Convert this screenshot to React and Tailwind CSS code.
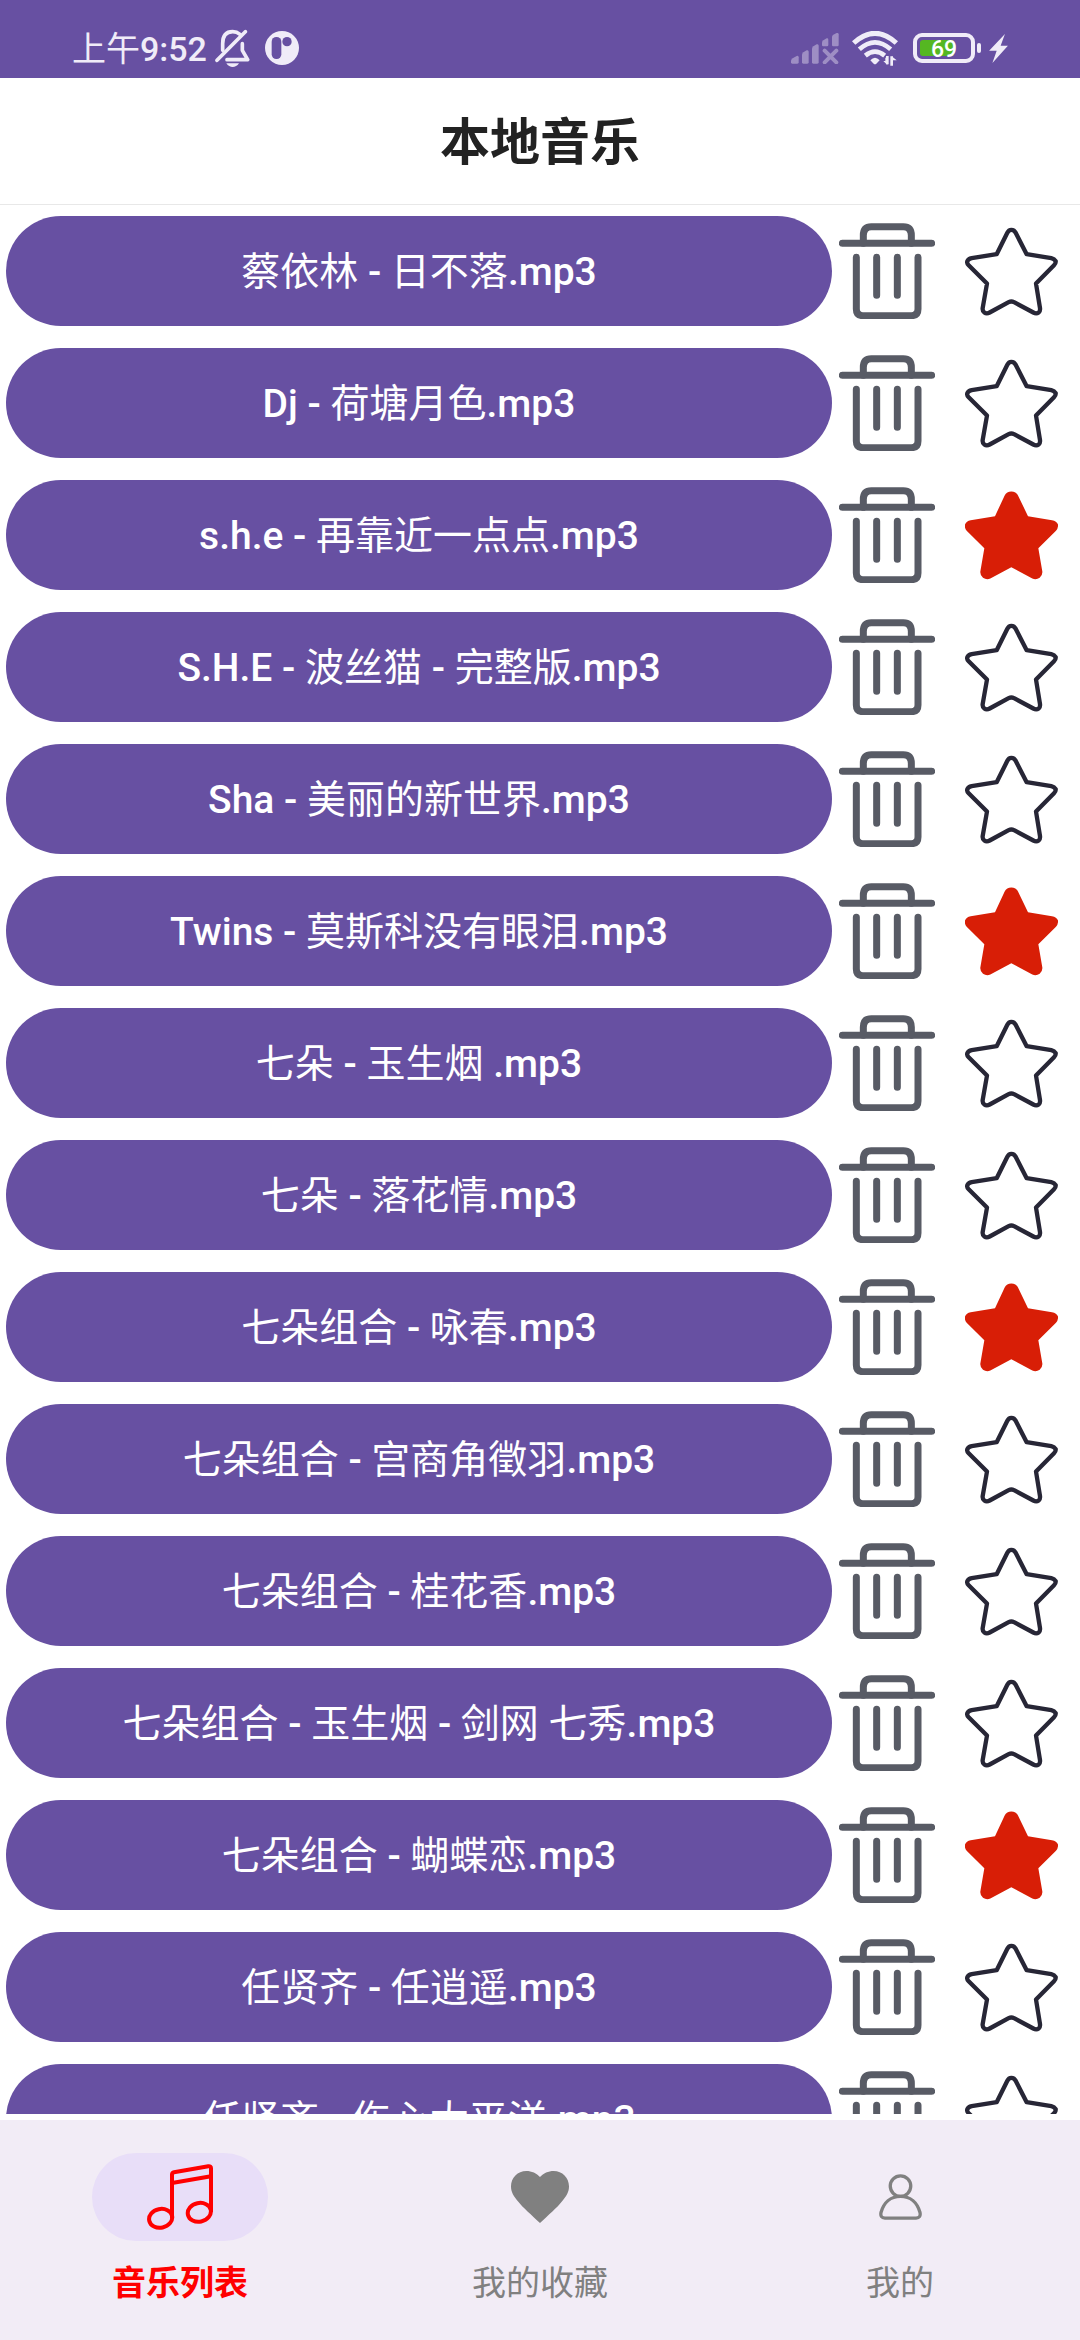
import React, { useState } from "react";

const SONGS = [
  ["蔡依林 - 日不落.mp3", false],
  ["Dj - 荷塘月色.mp3", false],
  ["s.h.e - 再靠近一点点.mp3", true],
  ["S.H.E - 波丝猫 - 完整版.mp3", false],
  ["Sha - 美丽的新世界.mp3", false],
  ["Twins - 莫斯科没有眼泪.mp3", true],
  ["七朵 - 玉生烟 .mp3", false],
  ["七朵 - 落花情.mp3", false],
  ["七朵组合 - 咏春.mp3", true],
  ["七朵组合 - 宫商角徵羽.mp3", false],
  ["七朵组合 - 桂花香.mp3", false],
  ["七朵组合 - 玉生烟 - 剑网 七秀.mp3", false],
  ["七朵组合 - 蝴蝶恋.mp3", true],
  ["任贤齐 - 任逍遥.mp3", false],
  ["任贤齐 - 伤心太平洋.mp3", false],
];

// Latin runs are set in medium weight, Chinese runs in regular.
function MixedText({ text }) {
  return text.split(/([\u0020-\u007e]+)/).map((part, i) =>
    i % 2 === 1 ? (
      <span key={i} className="font-medium">{part}</span>
    ) : (
      part
    )
  );
}

function BellOffIcon() {
  return (
    <svg viewBox="0 0 105 114" className="h-[38px] w-[35px]" fill="none" stroke="currentColor" strokeWidth="11" strokeLinecap="round" strokeLinejoin="round" aria-hidden="true">
      <path d="M23 64V44C23 20 34 8 53 8C62 8 69 11 75 16" />
      <path d="M6 94L91 8" />
      <path d="M82 44V64L98 92H36" />
      <path d="M34 103H72C67 111 60 114 53 114C46 114 39 111 34 103Z" fill="currentColor" stroke="none" />
    </svg>
  );
}

function AppBadgeIcon() {
  return (
    <svg viewBox="0 0 102 102" className="size-[34px]" aria-hidden="true">
      <circle cx="51" cy="51" r="51" fill="currentColor" />
      <rect x="20" y="18" width="29" height="66" rx="14" fill="#6750a2" />
      <circle cx="66" cy="32" r="14" fill="#6750a2" />
    </svg>
  );
}

function SignalIcon() {
  return (
    <svg viewBox="0 0 144 93" className="h-[31px] w-[48px] opacity-40" fill="currentColor" aria-hidden="true">
      <path d="M0 84Q0 79 5 76L17 69Q23 67 23 73V88Q23 92 19 92H4Q0 92 0 88Z" />
      <path d="M33 66Q33 61 37 58L47 52Q53 50 53 56V88Q53 92 49 92H37Q33 92 33 88Z" />
      <path d="M63 48Q63 43 67 40L77 34Q83 32 83 38V88Q83 92 79 92H67Q63 92 63 88Z" />
      <path d="M93 29Q93 25 97 22L107 16Q112 15 112 20V36Q112 40 108 40H97Q93 40 93 36Z" />
      <path d="M123 12Q123 8 127 5L137 0Q143 -1 143 4V36Q143 40 139 40H127Q123 40 123 36Z" />
      <path d="M101 53L136 88M136 53L101 88" fill="none" stroke="currentColor" strokeWidth="12" strokeLinecap="round" />
    </svg>
  );
}

function WifiIcon() {
  return (
    <svg viewBox="0 0 138 105" className="h-[35px] w-[46px]" fill="none" stroke="currentColor" aria-hidden="true">
      <path d="M5 36Q69 -22 133 36" strokeWidth="15" />
      <path d="M22 55Q69 13 116 55" strokeWidth="14" />
      <path d="M40 74Q69 50 98 74" strokeWidth="14" />
      <path d="M55 88Q69 72 83 88L73 98Q69 102 65 98Z" fill="currentColor" stroke="none" />
      <path d="M106 75V102L94 90H100V81Z" fill="currentColor" stroke="none" />
      <path d="M106 75V100M119 76V104" strokeWidth="8" />
      <path d="M119 76L134 88H119Z" fill="currentColor" stroke="none" />
    </svg>
  );
}

function BoltIcon() {
  return (
    <svg viewBox="0 0 57 88" className="h-[29px] w-[19px]" fill="currentColor" aria-hidden="true">
      <path d="M48 0L0 51H23L10 88L57 36H35Z" />
    </svg>
  );
}

function Battery() {
  return (
    <div className="flex items-center gap-[2px]" aria-label="电量 69%">
      <div className="relative flex h-[30px] w-[62px] items-center justify-center rounded-[9px] border-4 border-[#f0ecf8]">
        <div className="absolute inset-y-[3px] left-[3px] w-[34px] rounded-[3px] bg-[#55b722]" />
        <span className="relative pt-[2px] text-[23px] leading-none font-medium text-white">69</span>
      </div>
      <div className="h-[10px] w-1 rounded-full bg-[#f0ecf8]" />
    </div>
  );
}

function TrashIcon() {
  return (
    <svg viewBox="0 0 288 288" className="size-24" fill="none" stroke="#585b65" strokeWidth="21" strokeLinecap="round" aria-hidden="true">
      <path d="M10 61H278" />
      <path d="M73 61V37Q73 11 97 11H193Q217 11 217 37V61" />
      <path d="M52 103V258Q52 278 72 278H217Q237 278 237 258V103" />
      <path d="M113 103V217M175 103V217" />
    </svg>
  );
}

function StarIcon({ filled }) {
  return filled ? (
    <svg viewBox="0 0 279 266" className="h-[89px] w-[93px]" fill="#d81e06" aria-hidden="true">
      <path d="M139 1Q153 1 159 13L189 75L261 87Q275 89 279 100Q280 111 273 119L220 171L232 241Q233 253 224 260Q213 267 202 262L139 228L76 262Q65 267 54 260Q45 253 46 241L58 171L5 119Q-2 111 0 100Q4 89 17 87L90 75L119 13Q125 1 139 1Z" />
    </svg>
  ) : (
    <svg viewBox="0 0 279 266" className="h-[89px] w-[93px]" fill="none" stroke="#272636" strokeWidth="13" strokeLinejoin="round" aria-hidden="true">
      <path d="M139 8Q148 8 152 17L185 81L259 93Q268 95 272 102Q273 108 267 114L213 169L225 243Q226 252 221 256Q214 261 205 256L147 225Q139 221 131 225L74 256Q65 261 58 256Q52 252 53 243L66 169L11 114Q5 108 7 102Q10 95 20 93L95 81L127 17Q131 8 139 8Z" />
    </svg>
  );
}

function MusicIcon() {
  return (
    <svg viewBox="0 0 198 198" className="size-[66px]" fill="none" stroke="currentColor" strokeWidth="12" strokeLinejoin="round" aria-hidden="true">
      <path d="M75 162V32Q75 26 81 25L184 7Q192 6 192 13V144" />
      <path d="M75 57L192 37" />
      <ellipse cx="41" cy="163" rx="35" ry="28" transform="rotate(-12 41 163)" />
      <ellipse cx="157" cy="145" rx="35" ry="28" transform="rotate(-12 157 145)" />
    </svg>
  );
}

function HeartIcon() {
  return (
    <svg viewBox="0 0 174 156" className="h-[52px] w-[58px]" fill="currentColor" aria-hidden="true">
      <path d="M87 156C60 130 36 110 22 92C8 76 0 64 0 46C0 20 20 0 46 0C62 0 77 7 87 18C97 7 112 0 128 0C154 0 174 20 174 46C174 64 166 76 152 92C138 110 114 130 87 156Z" />
    </svg>
  );
}

function PersonIcon() {
  return (
    <svg viewBox="0 0 130 138" className="h-[46px] w-[43px]" fill="none" stroke="currentColor" strokeWidth="10" aria-hidden="true">
      <circle cx="65" cy="36" r="31" />
      <path d="M65 67C95 67 116 86 124 116Q127 132 112 133H18Q3 132 6 116C14 86 35 67 65 67Z" />
    </svg>
  );
}

const TABS = [
  ["音乐列表", MusicIcon],
  ["我的收藏", HeartIcon],
  ["我的", PersonIcon],
];

export default function App() {
  const [favourites, setFavourites] = useState(SONGS.map((s) => s[1]));
  const [tab, setTab] = useState(0);
  const toggle = (i) => setFavourites(favourites.map((f, n) => (n === i ? !f : f)));

  return (
    <div className="flex h-screen flex-col bg-white font-[Roboto,'Noto_Sans_CJK_SC',sans-serif]">
      <div className="flex h-[78px] shrink-0 items-center justify-between bg-[#6750a2] px-[72px] pt-[18px] text-[#f0ecf8]">
        <div className="flex items-center">
          <span className="pt-[2px] text-[34px] leading-none"><MixedText text="上午9:52" /></span>
          <span className="ml-2 flex items-center gap-[15px]">
            <BellOffIcon />
            <AppBadgeIcon />
          </span>
        </div>
        <div className="flex items-center">
          <SignalIcon />
          <span className="ml-[13px] mr-[15px]"><WifiIcon /></span>
          <Battery />
          <span className="ml-2"><BoltIcon /></span>
        </div>
      </div>

      <header className="flex h-[127px] shrink-0 items-center justify-center border-b border-[#e8e8e8] pt-1">
        <h1 className="text-[50px] leading-none font-bold text-[#222222]">本地音乐</h1>
      </header>

      <ul className="mb-[6px] min-h-0 flex-1 overflow-y-auto [scrollbar-width:none]">
        {SONGS.map(([name], i) => (
          <li key={name} className="flex h-[132px] items-center pl-[6px]">
            <button type="button" className="h-[110px] min-w-0 flex-1 truncate rounded-full bg-[#6750a2] px-6 pt-[3px] text-[39px] text-white">
              <MixedText text={name} />
            </button>
            <button type="button" aria-label={"删除 " + name} className="flex h-[110px] w-[110px] items-start justify-center pt-[7px]">
              <TrashIcon />
            </button>
            <button type="button" aria-label={"收藏 " + name} aria-pressed={favourites[i]} onClick={() => toggle(i)} className="flex h-[110px] w-[138px] items-center justify-center">
              <StarIcon filled={favourites[i]} />
            </button>
          </li>
        ))}
      </ul>

      <nav className="grid h-[220px] shrink-0 grid-cols-3 bg-[#f2ecf6]">
        {TABS.map(([label, Icon], i) => (
          <button
            key={label}
            type="button"
            aria-current={tab === i ? "page" : undefined}
            onClick={() => setTab(i)}
            className={"flex flex-col items-center pt-[33px] text-[34px] " + (tab === i ? "font-bold text-[#ff0000]" : "text-[#808080]")}
          >
            <span className={"flex h-[88px] w-44 items-center justify-center rounded-full " + (tab === i ? "bg-[#e8def8]" : "")}>
              <Icon />
            </span>
            <span className="mt-[18px] leading-[48px]">{label}</span>
          </button>
        ))}
      </nav>
    </div>
  );
}
